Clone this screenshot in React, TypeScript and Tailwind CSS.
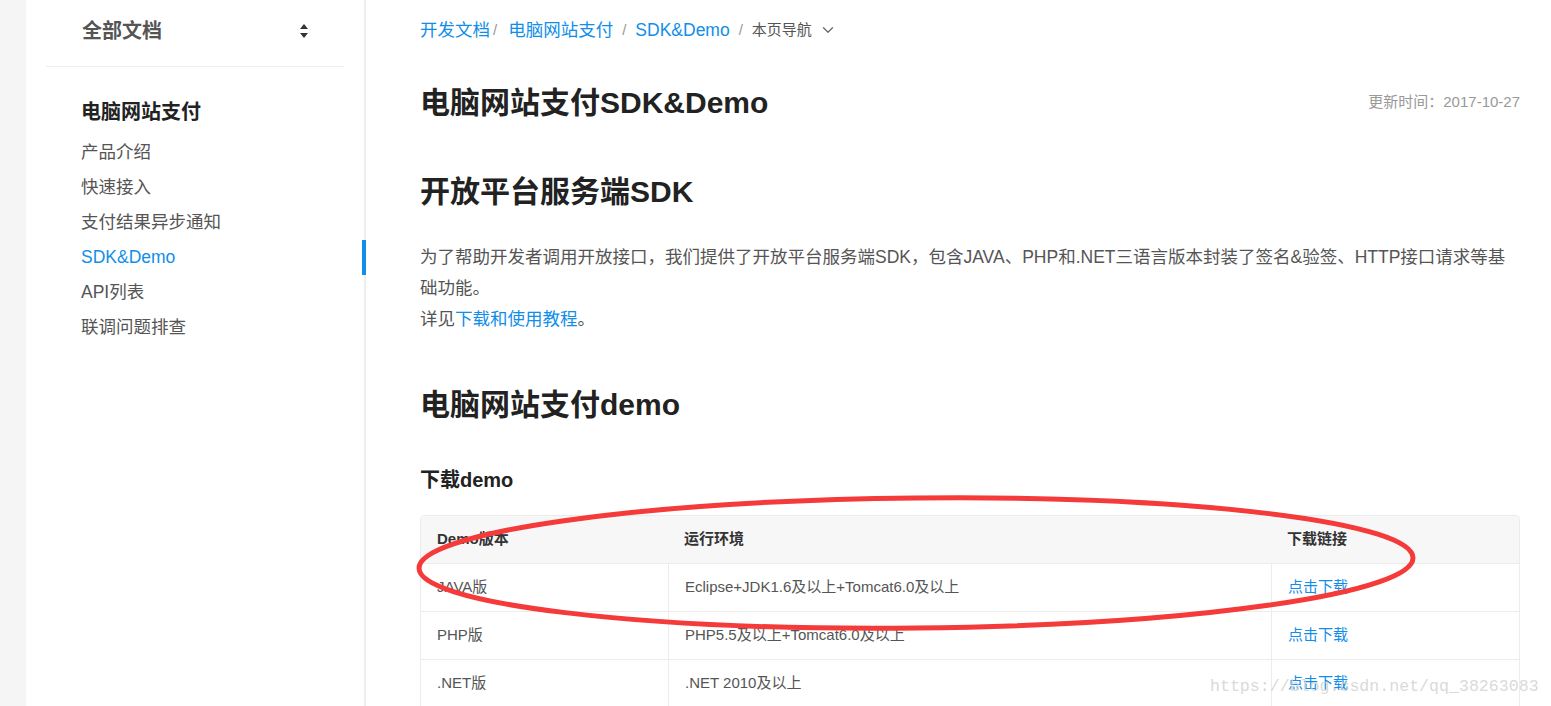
import { ChevronDown } from 'lucide-react';

const font = "font-['Liberation_Sans','Noto_Sans_CJK_SC',sans-serif]";

const navItems = ['产品介绍', '快速接入', '支付结果异步通知', 'SDK&Demo', 'API列表', '联调问题排查'];

const rows = [
  { name: 'JAVA版', env: 'Eclipse+JDK1.6及以上+Tomcat6.0及以上' },
  { name: 'PHP版', env: 'PHP5.5及以上+Tomcat6.0及以上' },
  { name: '.NET版', env: '.NET 2010及以上' },
];

function SortIcon() {
  return (
    <svg width="8" height="14" viewBox="0 0 8 14" className="text-[#333]">
      <path d="M4 0 L8 5 H0 Z" fill="currentColor" />
      <path d="M4 14 L0 9 H8 Z" fill="currentColor" />
    </svg>
  );
}

function Sidebar() {
  return (
    <aside className="w-[340px] shrink-0 bg-white border-r-2 border-[#eeeeee]">
      <div className="mx-[20px] h-[67px] pb-[5px] border-b border-[#eeeeee] flex items-center justify-between pl-[36px] pr-[36px]">
        <span className="text-[20px] font-bold text-[#555]">全部文档</span>
        <SortIcon />
      </div>
      <div className="mt-[27px] mb-[6px] h-[35px] flex items-center pl-[55px] text-[20px] font-bold text-[#222]">
        电脑网站支付
      </div>
      <ul>
        {navItems.map((item) => {
          const active = item === 'SDK&Demo';
          return (
            <li key={item} className="relative h-[35px] flex items-center pl-[55px] text-[17.5px]">
              <span className={active ? 'text-[#108ee9]' : 'text-[#555]'}>{item}</span>
              {active && <span className="absolute right-[-2px] top-0 h-full w-[4px] bg-[#108ee9]" />}
            </li>
          );
        })}
      </ul>
    </aside>
  );
}

function Breadcrumb() {
  return (
    <div className="h-[60px] flex items-center text-[17.5px]">
      <a className="text-[#108ee9]">开发文档</a>
      <span className="ml-[3px] mr-[11px] text-[15px] text-[#999]">/</span>
      <a className="text-[#108ee9]">电脑网站支付</a>
      <span className="mx-[9px] text-[15px] text-[#999]">/</span>
      <a className="text-[#108ee9]">SDK&Demo</a>
      <span className="mx-[9px] text-[15px] text-[#999]">/</span>
      <span className="text-[15px] text-[#555]">本页导航</span>
      <ChevronDown size={18} strokeWidth={1.6} className="ml-[7px] text-[#666]" />
    </div>
  );
}

function DemoTable() {
  return (
    <div className="mt-[21px] border border-[#ececec] rounded-t-[4px] text-[15px] text-[#555]">
      <div className="grid grid-cols-[247px_1fr_248px] h-[47px] bg-[#f7f7f7] font-bold text-[#333] rounded-t-[4px]">
        <div className="flex items-center pl-[16px]">Demo版本</div>
        <div className="flex items-center pl-[16px]">运行环境</div>
        <div className="flex items-center pl-[16px]">下载链接</div>
      </div>
      {rows.map((row) => (
        <div key={row.name} className="grid grid-cols-[247px_1fr_248px] h-[48px] border-t border-[#ececec]">
          <div className="flex items-center pl-[16px]">{row.name}</div>
          <div className="flex items-center pl-[16px] border-l border-[#ececec]">{row.env}</div>
          <div className="flex items-center pl-[16px] border-l border-[#ececec]">
            <a className="text-[#108ee9]">点击下载</a>
          </div>
        </div>
      ))}
    </div>
  );
}

export default function App() {
  return (
    <div className={`relative h-[706px] overflow-hidden flex bg-white ${font}`}>
      <div className="w-[26px] shrink-0 bg-[#f5f5f5]" />
      <Sidebar />
      <main className="flex-1 pl-[54px] pr-[31px]">
        <Breadcrumb />
        <div className="mt-[22px] h-[40px] flex items-center justify-between">
          <h1 className="text-[30px] font-bold text-[#222]">电脑网站支付SDK&Demo</h1>
          <span className="text-[15px] text-[#999]">更新时间：2017-10-27</span>
        </div>
        <h2 className="mt-[50px] h-[40px] leading-[40px] text-[30px] font-bold text-[#222]">开放平台服务端SDK</h2>
        <p className="mt-[30px] text-[17.5px] leading-[31px] text-[#555]">
          为了帮助开发者调用开放接口，我们提供了开放平台服务端SDK，包含JAVA、PHP和.NET三语言版本封装了签名&验签、HTTP接口请求等基础功能。
          <br />
          详见<a className="text-[#108ee9]">下载和使用教程</a>。
        </p>
        <h2 className="mt-[50px] h-[40px] leading-[40px] text-[30px] font-bold text-[#222]">电脑网站支付demo</h2>
        <h3 className="mt-[41px] h-[28px] leading-[28px] text-[20px] font-bold text-[#222]">下载demo</h3>
        <DemoTable />
      </main>

      <svg className="absolute left-0 top-0 pointer-events-none" width="1551" height="706">
        <ellipse cx="916" cy="563" rx="497" ry="65" fill="none" stroke="#f53a3a" strokeWidth="5" transform="rotate(-0.6 916 563)" />
      </svg>
      <span className="absolute left-[1210px] top-[675px] font-['Liberation_Mono',monospace] text-[16.6px] text-[#cfcfcf]/80 pointer-events-none">
        https://blog.csdn.net/qq_38263083
      </span>
    </div>
  );
}
